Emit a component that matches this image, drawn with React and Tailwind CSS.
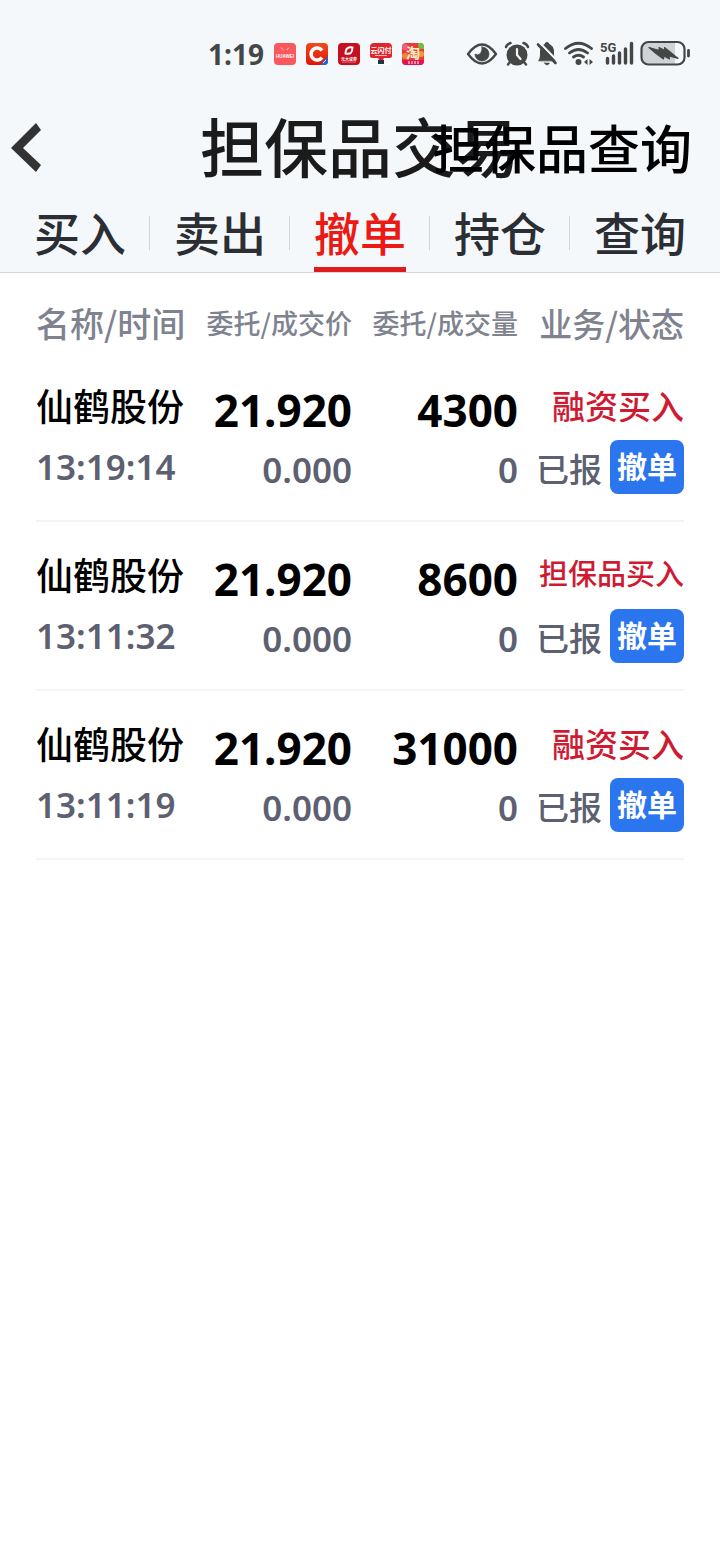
const pedidos = [
  { nome: '仙鹤股份', hora: '13:19:14', preco: '21.920', precoExec: '0.000', qtd: '4300', qtdExec: '0', tipo: '融资买入', status: '已报' },
  { nome: '仙鹤股份', hora: '13:11:32', preco: '21.920', precoExec: '0.000', qtd: '8600', qtdExec: '0', tipo: '担保品买入', status: '已报' },
  { nome: '仙鹤股份', hora: '13:11:19', preco: '21.920', precoExec: '0.000', qtd: '31000', qtdExec: '0', tipo: '融资买入', status: '已报' }
];

const abas = ['买入', '卖出', '撤单', '持仓', '查询'];

function AppIcons() {
  return (
    <div className="flex gap-[10px]">
      <svg className="size-[22px]" viewBox="0 0 22 22">
        <rect width="22" height="22" rx="4" fill="#f9585c" />
        <path d="M7 4.5 Q8 6.5 9.5 6.5 M15 4.5 Q14 6.5 12.5 6.5" fill="none" stroke="#ffd9d9" strokeWidth="0.8" />
        <text x="11" y="15" fontSize="4.5" fontWeight="700" textAnchor="middle" fill="#fff" className="font-['Liberation_Sans']">HUAWEI</text>
      </svg>
      <svg className="size-[22px]" viewBox="0 0 22 22">
        <defs>
          <linearGradient id="c-bg" x1="0" y1="0" x2="0" y2="1">
            <stop offset="0" stopColor="#f04a1e" />
            <stop offset="1" stopColor="#e01408" />
          </linearGradient>
          <clipPath id="c-clip"><rect width="22" height="22" rx="4" /></clipPath>
        </defs>
        <rect width="22" height="22" rx="4" fill="url(#c-bg)" />
        <path d="M16 7.6 A6 6 0 1 0 16 14.4" fill="none" stroke="#fff" strokeWidth="3.6" />
        <g clipPath="url(#c-clip)">
          <path d="M22 13 V22 H14 Z" fill="#2d62c8" />
          <path d="M17 20 L20 17" stroke="#cfe0ff" strokeWidth="1" />
        </g>
      </svg>
      <svg className="size-[22px]" viewBox="0 0 22 22">
        <rect width="22" height="22" rx="4" fill="#c70f20" />
        <path d="M9 5.5 Q11 4 14.5 4.5 Q14.5 8.5 12.5 10.2 Q10 11 7.5 10.5 Q7.2 7.5 9 5.5 Z" fill="none" stroke="#fff" strokeWidth="2" />
        <text x="11" y="17.5" fontSize="4" fontWeight="700" textAnchor="middle" fill="#fff" className="font-['Noto_Sans_CJK_SC']">元大证券</text>
        <path d="M4 19 H18" stroke="#e98a92" strokeWidth="0.8" />
      </svg>
      <svg className="size-[22px]" viewBox="0 0 22 22">
        <rect width="22" height="22" rx="4" fill="#fff" />
        <path d="M4 0 H18 Q22 0 22 4 V13 Q22 15 20 15 H14 L13 17 H9 L8 15 H2 Q0 15 0 13 V4 Q0 0 4 0 Z" fill="#e0252b" />
        <text x="11" y="9.5" fontSize="7" fontWeight="700" textAnchor="middle" fill="#fff" className="font-['Noto_Sans_CJK_SC']">云闪付</text>
        <path d="M5 12.5 H17" stroke="#f6b5b7" strokeWidth="1" />
        <rect x="8" y="17" width="3" height="4" fill="#123a5c" />
        <rect x="11" y="17" width="3" height="4" fill="#30303a" />
      </svg>
      <svg className="size-[22px]" viewBox="0 0 22 22">
        <defs>
          <clipPath id="t-clip"><rect width="22" height="22" rx="4" /></clipPath>
        </defs>
        <g clipPath="url(#t-clip)">
          <rect width="22" height="22" fill="#ea3a3c" />
          <circle cx="20" cy="2" r="4" fill="#6fc13c" />
          <circle cx="3" cy="4" r="3" fill="#f0637c" />
          <circle cx="3" cy="13" r="3" fill="#f2872e" />
          <circle cx="19" cy="11" r="3" fill="#f59a2e" />
          <rect y="17" width="22" height="5" fill="#e31350" />
        </g>
        <text x="11" y="14.5" fontSize="14" fontWeight="700" textAnchor="middle" fill="#fff5c8" className="font-['Noto_Sans_CJK_SC']">淘</text>
        <path d="M7 18 V21 M10 18 V21 M13 18 V21 M16 18 V21" stroke="#fff" strokeWidth="1" />
      </svg>
    </div>
  );
}

function SystemIcons() {
  return (
    <svg className="h-8 w-[228px]" viewBox="0 0 228 32" fill="none" stroke="#454746" strokeLinecap="round" strokeLinejoin="round">
      {/* olho */}
      <path d="M4 16 Q18 -3 32 16 Q18 35 4 16 Z" strokeWidth="2.4" />
      <path d="M18 9 A7 7 0 1 1 11 16 Q14 18 16.5 15.5 Q18.5 12.5 18 9 Z" fill="#454746" strokeWidth="0.8" />

      {/* alarme */}
      <circle cx="53" cy="17" r="10.5" fill="#454746" stroke="none" />
      <path d="M42 9 Q43 6 46.5 5 M64 9 Q63 6 59.5 5 M46 24 L44 26.5 M60 24 L62 26.5" strokeWidth="2.4" />
      <path d="M53 11 V17 L56.5 21" stroke="#f4f8fb" strokeWidth="2.2" />

      {/* sino silenciado */}
      <path d="M75 22.5 Q76.5 20.5 76.5 17 V13 Q77 7.5 81 6.5 Q81 4.5 83 4.5 Q85 4.5 85 6.5 Q89 7.5 89.5 13 V17 Q89.5 20.5 91 22.5 Z" fill="#454746" strokeWidth="1" />
      <path d="M80.5 25 H85.5 Q84.5 27 83 27 Q81.5 27 80.5 25 Z" fill="#454746" strokeWidth="0.5" />
      <path d="M76 5 L93.5 23" stroke="#f4f8fb" strokeWidth="2" />
      <path d="M74 6.5 L91.5 25" strokeWidth="2.6" />

      {/* wifi */}
      <path d="M101.5 10.5 Q114.5 0 127.5 10.5 M105.5 15 Q114.5 8 123.5 15 M109.5 19 Q114.5 15.5 119.5 19" strokeWidth="2.8" />
      <circle cx="114.5" cy="24" r="3" fill="#454746" stroke="none" />
      <path d="M123.5 21 V27 L120 24 Z M125.5 21 V27 L129 24 Z" fill="#454746" stroke="none" />

      {/* sinal */}
      <text x="136" y="14" fontSize="13" fontWeight="700" fill="#454746" stroke="none" className="font-['Roboto']">5G</text>
      <path d="M143.5 20.5 V25 M149.5 18 V25 M155.5 15 V25 M161.5 11 V25 M167.5 5.5 V25" strokeWidth="3.4" />

      {/* bateria */}
      <path d="M185 4 H211 V26 H185 Q178 26 178 19 V11 Q178 4 185 4 Z" fill="#d0d3d5" stroke="none" />
      <rect x="177.5" y="4" width="43" height="22.5" rx="7" strokeWidth="2.2" />
      <path d="M185 9.5 L195.5 12.5 L195 9.5 L201 12.5 L200.5 9.5 L208 15.5 L214 20.5 L205 18 L205.5 21 L200 18 L199.5 21 L192 15.5 Z" fill="#454746" strokeWidth="1.2" />
      <path d="M224.5 12.5 V18" strokeWidth="2.8" />
    </svg>
  );
}

function StatusBar() {
  return (
    <div className="flex h-[102px] items-center justify-between pt-[6px] pr-7 pl-52">
      <div className="flex items-center gap-[10px]">
        <span className="font-['Noto_Sans'] text-[28px] leading-8 font-bold text-[#454746]">1:19</span>
        <AppIcons />
      </div>
      <SystemIcons />
    </div>
  );
}

function Cabecalho() {
  return (
    <header className="relative flex h-[92px] items-center justify-center">
      <button type="button" aria-label="返回" className="absolute inset-y-0 left-0 flex items-center pl-[11px]">
        <svg className="h-[50px] w-[30px]" viewBox="0 0 30 50">
          <path d="M25 0 L30 7 L12 25 L30 42 L25 49 L0 25 Z" fill="#333" />
        </svg>
      </button>
      <h1 className="pb-2 text-[64px] leading-[84px] font-medium text-[#1b1b1b]">担保品交易</h1>
      <a href="#consulta" className="absolute inset-y-0 right-7 text-[52px] leading-[90px] font-medium text-black">
        担保品查询
      </a>
    </header>
  );
}

function Abas() {
  return (
    <nav className="grid h-[79px] grid-cols-5 border-b border-[#d3d6d9] px-[10px]">
      {abas.map((aba, i) => (
        <div key={aba} className="relative flex items-center justify-center">
          {i > 0 && <span className="absolute -left-px h-[34px] w-px bg-[#d3d6d9]" />}
          <button
            type="button"
            className={
              aba === '撤单'
                ? 'h-full border-b-[5px] border-[#e11b1b] pt-px text-[46px] leading-[60px] font-medium text-[#eb1a14]'
                : 'h-full pb-1 text-[46px] leading-[60px] font-medium text-[#2b2f33]'
            }
          >
            {aba}
          </button>
        </div>
      ))}
    </nav>
  );
}

function Pedido({ pedido }) {
  return (
    <tr className="border-b-2 border-[#f4f4f5] text-right align-top">
      <td className="pt-[22px] pb-[23px] text-left">
        <div className="text-[37px] leading-[60px] font-medium text-black">{pedido.nome}</div>
        <div className="mt-0.5 font-['Noto_Sans'] text-[35px] leading-[60px] font-semibold text-[#5c6070]">{pedido.hora}</div>
      </td>
      <td className="pt-[27px] pb-5 font-['Noto_Sans']">
        <div className="text-[44px] leading-[60px] font-bold text-black">{pedido.preco}</div>
        <div className="text-[35px] leading-[60px] font-semibold text-[#5c6070]">{pedido.precoExec}</div>
      </td>
      <td className="pt-[27px] pb-5 font-['Noto_Sans']">
        <div className="text-[44px] leading-[60px] font-bold text-black">{pedido.qtd}</div>
        <div className="text-[35px] leading-[60px] font-semibold text-[#5c6070]">{pedido.qtdExec}</div>
      </td>
      <td className="pt-[22px] pb-[23px] whitespace-nowrap">
        <div
          className={
            pedido.tipo.length > 4
              ? 'pb-1 text-[29px] leading-[56px] font-medium text-[#cf1a32]'
              : 'text-[33px] leading-[60px] font-medium text-[#cf1a32]'
          }
        >
          {pedido.tipo}
        </div>
        <div className="mt-0.5 flex h-[60px] items-center justify-end gap-2">
          <span className="pt-1 text-[33px] font-medium text-[#5c6070]">{pedido.status}</span>
          <button type="button" className="h-[54px] w-[74px] rounded-lg bg-[#2b75ef] pb-1 text-[30px] leading-[50px] font-bold text-white">
            撤单
          </button>
        </div>
      </td>
    </tr>
  );
}

export default function App() {
  return (
    <div className="min-h-screen bg-white font-['Noto_Sans_CJK_SC',sans-serif]">
      <div className="bg-[#f4f8fb]">
        <StatusBar />
        <Cabecalho />
        <Abas />
      </div>

      <main className="px-9">
        <table className="w-full table-fixed border-collapse">
          <thead>
            <tr className="text-right whitespace-nowrap text-[#7e838f]">
              <th className="w-[150px] pt-5 text-left text-[34px] leading-[60px] font-medium">名称/时间</th>
              <th className="pt-5 text-[27px] leading-[60px] font-medium">委托/成交价</th>
              <th className="pt-5 text-[27px] leading-[60px] font-medium">委托/成交量</th>
              <th className="pt-5 text-[33px] leading-[60px] font-medium">业务/状态</th>
            </tr>
          </thead>
          <tbody>
            {pedidos.map((pedido) => (
              <Pedido key={pedido.hora} pedido={pedido} />
            ))}
          </tbody>
        </table>
      </main>
    </div>
  );
}
